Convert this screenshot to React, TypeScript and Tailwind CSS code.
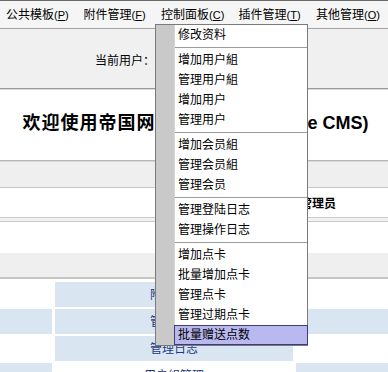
const menuBar = [
  { label: '公共模板', key: 'P' },
  { label: '附件管理', key: 'F' },
  { label: '控制面板', key: 'C' },
  { label: '插件管理', key: 'T' },
  { label: '其他管理', key: 'O' },
];

// null = separator
const dropdown: (string | null)[] = [
  '修改资料',
  null,
  '增加用户組',
  '管理用户組',
  '增加用户',
  '管理用户',
  null,
  '增加会员組',
  '管理会员組',
  '管理会员',
  null,
  '管理登陆日志',
  '管理操作日志',
  null,
  '增加点卡',
  '批量增加点卡',
  '管理点卡',
  '管理过期点卡',
  '批量赠送点数',
];

const active = '批量赠送点数';

// [col1, col2, col3] shaded?
const rows: { shade: boolean[]; text: string }[] = [
  { shade: [false, true, false], text: '附件管理' },
  { shade: [true, true, true], text: '管理栏目' },
  { shade: [false, true, false], text: '管理日志' },
  { shade: [true, false, true], text: '用户組管理' },
];

function DropdownMenu() {
  return (
    <div className="absolute left-[155px] top-[24px] w-[153px] border border-[#7a7a7a] bg-white flex">
      <div className="w-[19px] bg-[#c9c9c9] border-r border-[#d6d6d6]" />
      <div className="flex-1 flex flex-col">
        {dropdown.map((item, i) =>
          item === null ? (
            <div key={i} className="h-[5px] flex items-center">
              <div className="h-px w-full bg-[#9c9c9c]" />
            </div>
          ) : item === active ? (
            <div
              key={i}
              className="h-[20px] -ml-px -mr-px flex items-center pl-[3px] bg-[#b9b9f0] border border-[#3c3c7c] text-[12px] text-black"
            >
              {item}
            </div>
          ) : (
            <div key={i} className="h-[20px] flex items-center pl-[3px] text-[12px] text-black">
              {item}
            </div>
          )
        )}
      </div>
    </div>
  );
}

export default function App() {
  return (
    <div
      className="relative w-[388px] h-[372px] overflow-hidden bg-white"
      style={{ fontFamily: '"Liberation Sans", "Noto Sans CJK SC", sans-serif' }}
    >
      {/* Menu bar */}
      <div className="border-t border-[#6a6a6a] h-[29px] bg-[#f5f5f5] border-b border-b-[#a4a4a4] flex items-center pl-[6px]">
        {menuBar.map(m => (
          <span key={m.key} className="w-[77.5px] shrink-0 text-[12px] text-black whitespace-nowrap">
            {m.label}
            <span className="text-[11px]">
              (<span className="underline">{m.key}</span>)
            </span>
          </span>
        ))}
      </div>

      {/* Current user header */}
      <div className="h-[59px] bg-[#f0f0f0] flex items-center pl-[95px] pt-[4px]">
        <span className="text-[12px] text-black">当前用户：</span>
      </div>
      <div className="border-t border-[#9a9a9a] border-b border-b-[#dadada]" />

      {/* Title */}
      <div className="h-[70px] flex items-center justify-center pb-[4px] pl-[3px]">
        <span className="font-bold text-[18px] text-black whitespace-nowrap">
          <span className="tracking-[1px]">欢迎使用帝国网站管理系统</span>(Empire CMS)
        </span>
      </div>
      <div className="border-t border-[#b8b8b8] border-b border-b-[#d8d8d8]" />

      <div className="h-[26px] bg-[#efefef] border-b border-[#c8c8c8]" />
      <div className="h-[29px] flex items-center justify-end pr-[52px] pt-[3px]">
        <span className="font-bold text-[12px] text-black">超级管理员</span>
      </div>
      <div className="h-[5px] border-y border-[#cacaca] bg-[#f2f2f2]" />
      <div className="h-[31px]" />
      <div className="h-[26px] bg-[#efefef] border-b-2 border-[#c6c6c6]" />

      {/* Table */}
      <div className="mt-[3px] grid grid-cols-[52px_238px_1fr] gap-x-[3px] gap-y-[2px] auto-rows-[25px]">
        {rows.map((r, i) => (
          <div key={i} className="contents">
            <div className={r.shade[0] ? 'bg-[#d9e5f1]' : 'bg-white'} />
            <div
              className={`${r.shade[1] ? 'bg-[#d9e5f1]' : 'bg-white'} flex items-center justify-center text-[12px] text-[#1c3a86]`}
            >
              {r.text}
            </div>
            <div className={r.shade[2] ? 'bg-[#d9e5f1]' : 'bg-white'} />
          </div>
        ))}
      </div>

      <DropdownMenu />
    </div>
  );
}
